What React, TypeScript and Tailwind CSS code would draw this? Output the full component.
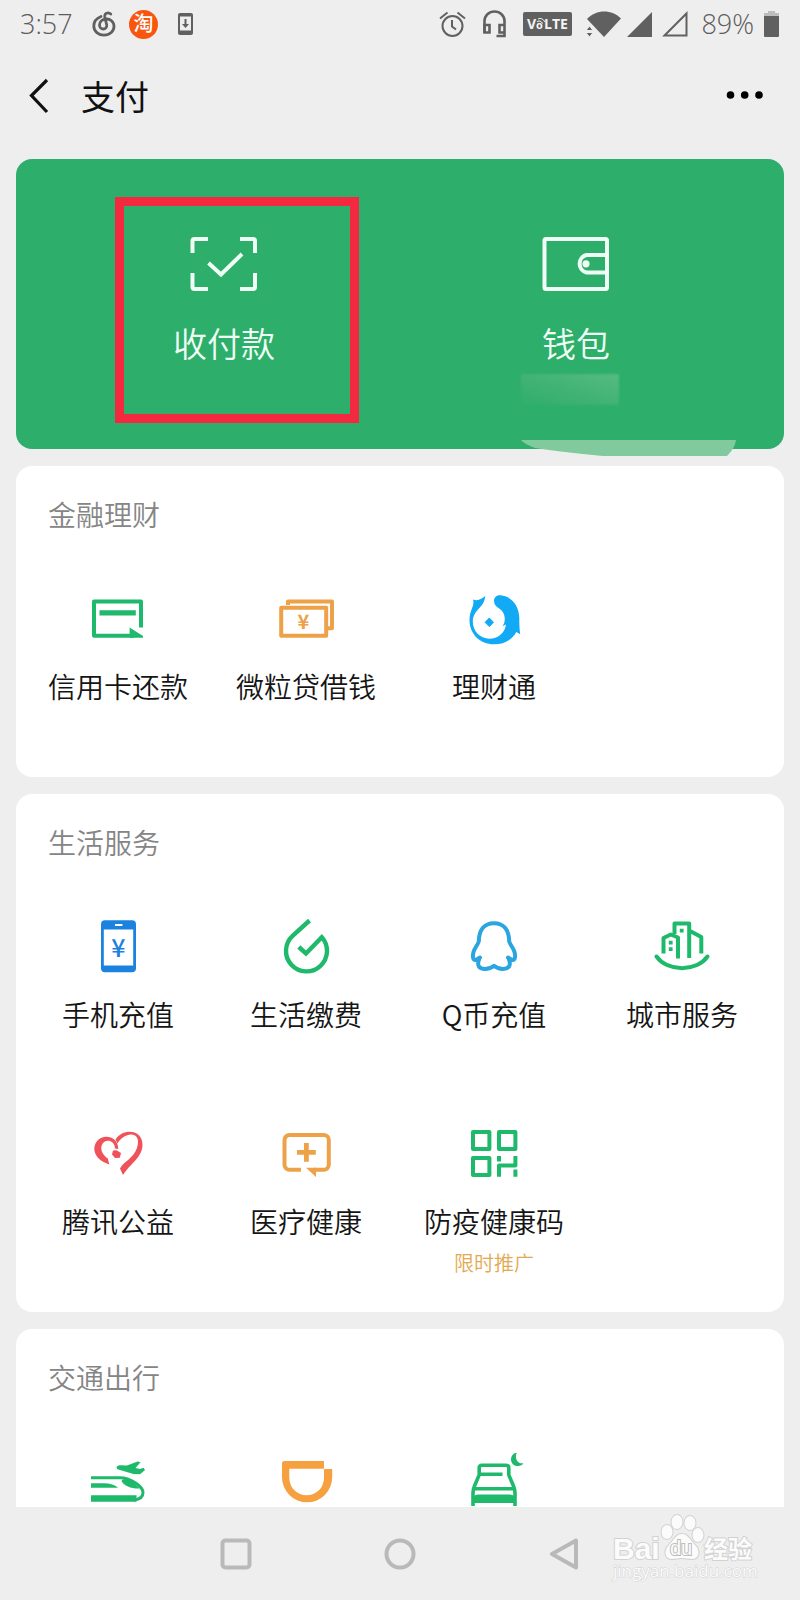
import type { ReactNode } from 'react'

type TEntry = {
  label?: string
  note?: string
  icon: ReactNode
}

const GREEN = '#1fb96b'
const ORANGE = '#eda24a'
const BLUE = '#1b82e0'
const SKY = '#12aaf5'
const RED = '#f0525a'

function Icon({ children }: { children: ReactNode }) {
  return (
    <svg
      viewBox="0 0 56 56"
      className="size-14 overflow-visible"
      fill="none"
      aria-hidden="true"
    >
      {children}
    </svg>
  )
}

const finance: TEntry[] = [
  {
    label: '信用卡还款',
    icon: (
      <Icon>
        <path d="M51 36.5V10.5H4V44.8H44" stroke={GREEN} strokeWidth="4" strokeLinejoin="round" />
        <path d="M9.5 19.2h36.3v5.4H9.5zM39.6 36.5 53 45v1.8H39.6z" fill={GREEN} />
      </Icon>
    ),
  },
  {
    label: '微粒贷借钱',
    icon: (
      <Icon>
        <g stroke={ORANGE} strokeWidth="4" strokeLinejoin="round">
          <path d="M3.2 16.8h45v28H3.2z" />
          <path d="M10 14v-3.6h44v26.8h-4" />
        </g>
        <text
          x="25.5"
          y="37.5"
          textAnchor="middle"
          fill={ORANGE}
          className="font-['Noto_Sans_CJK_SC'] text-[20px] font-bold"
        >
          ¥
        </text>
      </Icon>
    ),
  },
  {
    label: '理财通',
    icon: (
      <Icon>
        <path
          d="M7 8.5C12 10.5 16 7.5 19.2 5 18.5 17 7.5 18 6.8 30 6.5 40 14 47.7 23.3 47.7 32 47.7 39 42 40 33.5L36.2 35.2C39 32 39.2 28 38.2 24 36.5 17 28 17 28 10 28 6 31 4 34.5 4.2 44 5 53 13 53.3 27 53.3 34 53.5 38 54.3 43.2L50.3 41C46 49 38 53.3 28 53.3 14 53.3 3.5 43 3.5 29 3.5 19 9 15 7 8.5Z"
          fill={SKY}
        />
        <path d="m23.3 27 4.2 4.3-4.2 4.3-4.2-4.3z" fill={SKY} stroke={SKY} />
      </Icon>
    ),
  },
]

const life: TEntry[] = [
  {
    label: '手机充值',
    icon: (
      <Icon>
        <rect x="11" y="1.3" width="35" height="52" rx="4" fill={BLUE} />
        <path d="M13.8 10.4h29.4v36.2H13.8z" fill="#fff" />
        <path d="M25 5h7.4v2H25z" fill="#fff" />
        <text
          x="28.5"
          y="38"
          textAnchor="middle"
          fill={BLUE}
          className="font-['Noto_Sans_CJK_SC'] text-[25px] font-medium"
        >
          ¥
        </text>
      </Icon>
    ),
  },
  {
    label: '生活缴费',
    icon: (
      <Icon>
        <path
          d="M31.5 1.5 14.6 16.8A20.5 20.5 0 1 0 43.8 18.2L28 34.5 20.8 28"
          stroke={GREEN}
          strokeWidth="4.4"
        />
      </Icon>
    ),
  },
  {
    label: 'Q币充值',
    icon: (
      <Icon>
        <g stroke="#2aa5e0" strokeWidth="4" strokeLinecap="round" strokeLinejoin="round">
          <path d="M14 38.5 10 41C6.5 41.5 6.5 37 7.5 33 8.5 29 11.5 26.5 12.8 22.5 13 11 18 4.2 28 4.2 38 4.2 43 11 43.2 22.5 44.5 26.5 47.5 29 48.5 33 49.5 37 49.5 41.5 46 41L42 38.5" />
          <path d="M13 40.5C11 46 12.5 50 19 50 24 50 26 48.5 28 46.8 30 48.5 32 50 37 50 43.5 50 45 46 43 40.5" />
        </g>
      </Icon>
    ),
  },
  {
    label: '城市服务',
    icon: (
      <Icon>
        <g stroke={GREEN} strokeWidth="4" strokeLinejoin="round">
          <path d="M2.5 37.5C13.500 53 42.500 53 53.500 37.5" strokeLinecap="round" />
          <path d="M9.5 34.5V19L16.8 15.500 24 18.5V39.5" />
          <path d="M20.5 15V4.500H35.200V39M36 12 47.300 18V34.500" />
        </g>
        <path d="M25.800 9.800h3.800v3.800h-3.800zM14.800 21.800h3.800v3.800h-3.800zM14.800 28.200h3.800v3.800h-3.800z" fill={GREEN} />
      </Icon>
    ),
  },
  {
    label: '腾讯公益',
    icon: (
      <Icon>
        <g fill={RED}>
          <path d="M28.3 23C28 14 22 10.3 15.500 10.700 8 11.500 4 17.500 4.300 23.500 5 31 11 35.500 19.300 38.500L17.800 32.500C13 29 10.500 25 11.500 20 13 14.500 19 13.500 22.500 16.500 24.500 18.500 25 20.500 24.800 22.500Z" />
          <path d="M25.500 13.500C31 5.500 41 4 47.500 8 54 13 54 23 48.500 30.500 44 37 38 41 33 49L30 42.500C33 36 43 33 47 22 49.500 14 47.500 8.500 41 8.500 35 8.800 30 13 27.500 17.500Z" />
          <path d="m23 24.500 3.500-.3 4.500 2.800-1.200 4.800-4.800.2-3-3.500z" />
        </g>
      </Icon>
    ),
  },
  {
    label: '医疗健康',
    icon: (
      <Icon>
        <path
          d="M23 43.800H11.500A5 5 0 0 1 6.500 38.800V14A5 5 0 0 1 11.500 9H45.800A5 5 0 0 1 50.800 14V38.800A5 5 0 0 1 45.800 43.800H36"
          stroke={ORANGE}
          strokeWidth="4"
        />
        <path d="M28 41.800h10V51zM26 17h4.800v7h7v4.800h-7v7H26v-7h-7V24h7z" fill={ORANGE} />
      </Icon>
    ),
  },
  {
    label: '防疫健康码',
    note: '限时推广',
    icon: (
      <Icon>
        <path
          d="M7 6h16.400v17H7zM33 6h16.400v17H33zM7 32h16.400v17H7zM33 30v5.500M49.400 30v9.500H33v11.200M49.400 43.500v7.200"
          stroke={GREEN}
          strokeWidth="4"
          strokeLinejoin="round"
        />
      </Icon>
    ),
  },
]

const travel: TEntry[] = [
  {
    icon: (
      <Icon>
        <g fill={GREEN}>
          <path d="M1 29.300H14C20 29.300 25 31 28 33.800H1zM1 41.300H46.500V47.700H1z" />
          <path d="M31.500 27C33 24 39 24.500 43 28L50 34.500C42 35 34 32 31.500 27Z" />
          <path d="M26.500 13.800C26.500 12 28 11.200 30 11.200L37 11.500 47.500 7.500 50.500 8.200 45.500 14 50 15 53.500 13.800 55 16 50 20.300 43.500 20 27.500 15.200Z" />
        </g>
        <path
          d="M1 23.800H30C40 23.800 53 32 53 38.500 53 43 49 45.500 44 46"
          stroke={GREEN}
          strokeWidth="3"
        />
      </Icon>
    ),
  },
  {
    icon: (
      <Icon>
        <path
          fillRule="evenodd"
          d="M4 9.500A2.500 2.500 0 0 1 6.500 7H46V15H54.200V23.200A25.100 25.100 0 0 1 4 23.200ZM11.300 14.800V24A17.350 17.350 0 0 0 46 24V14.800Z"
          fill="#f7a040"
        />
      </Icon>
    ),
  },
  {
    icon: (
      <Icon>
        <g stroke={GREEN} strokeWidth="3.600">
          <path d="M7 52V39Q7 35.500 8.500 32L13.200 21V14C13.200 12 14 11.200 16 11.200H40C42 11.200 42.800 12 42.800 14V21L47.500 32Q49 35.500 49 39V52" />
          <path d="M14 20.200H36.500M8 34.800H48" />
        </g>
        <path d="M7 43Q8.500 40.500 12 40.500H44Q47.500 40.500 49 43V49H7z" fill={GREEN} />
        <path d="M50.700-1.300C43-.5 43 12 52 12 54.500 12 56.500 11 57.300 9.300 51 10 48.500 4 50.700-1.300Z" fill={GREEN} />
      </Icon>
    ),
  },
]

function Section({ title, items }: { title: string; items: TEntry[] }) {
  return (
    <section className="shrink-0 rounded-2xl bg-white px-2 pt-7">
      <h2 className="px-6 text-[28px] leading-10 font-[350] text-[#858585]">
        {title}
      </h2>
      <div className="mt-[57px] grid grid-cols-4 gap-y-[21px]">
        {items.map((item, i) => (
          <button
            key={i}
            type="button"
            className="flex h-[186px] flex-col items-center whitespace-nowrap"
          >
            {item.icon}
            {item.label && (
              <span className="mt-[19px] text-[28px] leading-10 font-[350] text-[#151515]">
                {item.label}
              </span>
            )}
            {item.note && (
              <span className="mt-[6px] text-[20px] leading-8 font-[350] text-[#e2a951]">
                {item.note}
              </span>
            )}
          </button>
        ))}
      </div>
    </section>
  )
}

function StatusBar() {
  return (
    <div className="flex h-12 shrink-0 items-center justify-between pr-[21px] pl-5 font-['Open_Sans','Noto_Sans_CJK_SC',sans-serif] text-[27px] leading-[46px] font-[350] text-[#5c5c5c]">
      <div className="flex items-center">
        <span className="w-[72px]">3:57</span>
        <svg width="24" height="26" viewBox="0 0 24 26" fill="none" stroke="#606060" strokeWidth="2.800" strokeLinecap="round" aria-hidden="true">
          <path d="M9 5.500C4 7.500 1.800 11.500 1.800 15 1.800 20.500 6.500 24.200 12 24.200 18 24.200 22 20 22 15.500 22 10.500 18 7.700 14 8 10 8.300 7.500 11 7.500 14 7.500 16.500 9.300 18 11.300 18 13.500 18 15 16.300 14.700 14L12.800 6C12.300 3.300 14 1.800 16 1.800 17.200 1.800 18 2.300 18.800 3" />
        </svg>
        <span className="ml-[13px] flex size-[29px] items-center justify-center rounded-full bg-[#f8560f] text-[20px] leading-none font-medium text-white">
          淘
        </span>
        <svg width="15" height="22" viewBox="0 0 15 22" className="ml-5" aria-hidden="true">
          <rect width="15" height="22" rx="2" fill="#606060" />
          <path d="M2 3.500h11v14H2z" fill="#eee" />
          <path d="M6.500 6h2v5H11l-3.500 4L4 11h2.500z" fill="#606060" />
        </svg>
      </div>
      <div className="flex items-center">
        <svg width="27" height="26" viewBox="0 0 27 26" fill="none" stroke="#606060" strokeWidth="2" aria-hidden="true">
          <circle cx="13.500" cy="15" r="10" />
          <path d="M13 9v6.500l4 3M1 7.500 8.500 1.500M26 7.500 18.500 1.500" />
        </svg>
        <svg width="23" height="28" viewBox="0 0 23 28" className="ml-[17px]" fill="none" stroke="#606060" strokeWidth="2.600" aria-hidden="true">
          <path d="M1.500 22.500V11C1.500 5.500 6 1.500 11.500 1.500S21.500 5.500 21.500 11V26H13.500" />
          <path d="M1.500 15H6.500V22.500H1.500zM21.500 15H16.500V22.500H21.500" />
        </svg>
        <span className="ml-[17px] flex h-6 w-[49px] items-center justify-center rounded-[2px] bg-[#606060] text-[#f4f4f4]">
          <svg width="49" height="24" viewBox="0 0 49 24" fill="currentColor" role="img" aria-label="VoLTE">
            <g className="font-['Open_Sans'] font-bold">
              <text x="4" y="17" className="text-[14px]">V</text>
              <text x="13" y="17" className="text-[11px]">o</text>
              <text x="21" y="17" className="text-[14px]">LTE</text>
            </g>
            <path d="M14 9.500q3-2 6 2M15 7q4-2 7 3" fill="none" stroke="currentColor" />
          </svg>
        </span>
        <svg width="36" height="26" viewBox="0 0 36 26" className="ml-[14px]" fill="#606060" aria-hidden="true">
          <path d="M1 8C10-2 26-2 35 7.500L18 26Z" />
          <path d="M0 19.500 3.500 15 7 19.500zM0 21.500H7L3.500 26z" stroke="#eee" />
        </svg>
        <svg width="25" height="25" viewBox="0 0 25 25" className="ml-[5px]" aria-hidden="true">
          <path d="M25 0V25H0z" fill="#606060" />
        </svg>
        <svg width="26" height="26" viewBox="0 0 26 26" className="ml-[10px]" aria-hidden="true">
          <path d="M24.500 2.500V24.500H2.500z" fill="none" stroke="#606060" strokeWidth="2" />
        </svg>
        <span className="ml-[13px]">89%</span>
        <svg width="15" height="26" viewBox="0 0 15 26" className="ml-[10px]" aria-hidden="true">
          <path d="M4 0h7v2h4v3H0V2h4z" fill="#bdbdbd" />
          <path d="M0 5h15v20a1 1 0 0 1-1 1H1a1 1 0 0 1-1-1z" fill="#606060" />
        </svg>
      </div>
    </div>
  )
}

function Header() {
  return (
    <header className="flex h-24 shrink-0 items-center justify-between pr-9 pl-7">
      <div className="flex items-center">
        <button type="button" aria-label="返回">
          <svg width="22" height="36" viewBox="0 0 22 36" fill="none" aria-hidden="true">
            <path d="M19 2 3.500 17.500 19 34" stroke="#111" strokeWidth="3.200" />
          </svg>
        </button>
        <h1 className="ml-[31px] text-[34px] leading-[48px] text-[#111]">支付</h1>
      </div>
      <button type="button" aria-label="更多">
        <svg width="38" height="10" viewBox="0 0 38 10" fill="#000" aria-hidden="true">
          <circle cx="4.500" cy="4" r="3.800" />
          <circle cx="18.700" cy="4" r="3.800" />
          <circle cx="33" cy="4" r="3.800" />
        </svg>
      </button>
    </header>
  )
}

function PayCard() {
  return (
    <section className="relative grid h-[290px] shrink-0 grid-cols-2 rounded-2xl bg-[#2dae6a] px-8 text-[34px] leading-[50px] font-[350] text-[#effff5]">
      <button type="button" className="relative flex flex-col items-center pt-[77px]">
        <svg width="68" height="56" viewBox="0 0 68 56" fill="none" stroke="#effff5" strokeWidth="4" aria-hidden="true">
          <path
            d="M2.500 17V5Q2.500 3 4.500 3H18M50 3H63Q65 3 65 5V17M65 37V51Q65 53 63 53H50M18 53H4.500Q2.500 53 2.500 51V37"
            strokeLinejoin="round"
          />
          <path d="M18.500 27 31 38.500 52 18" />
        </svg>
        <span className="mt-[26px]">收付款</span>
        <span className="absolute top-[38px] left-1/2 h-[226px] w-[244px] -translate-x-[109px] border-[9px] border-[#f4283f]" />
      </button>
      <button type="button" className="flex flex-col items-center pt-[77px]">
        <svg width="68" height="56" viewBox="0 0 68 56" fill="none" stroke="#effff5" strokeWidth="4" aria-hidden="true">
          <rect x="2.500" y="3" width="62.500" height="50" rx="1.500" />
          <path d="M64 19H44.500A9 9 0 0 0 44.500 36.500H64" />
          <circle cx="44" cy="27.800" r="3.600" fill="#effff5" stroke="none" />
        </svg>
        <span className="mt-[26px]">钱包</span>
        <span className="mt-[6px] mr-3 h-[31px] w-[98px] bg-linear-to-tr from-[#2fae6b] via-[#42b375] to-[#55bb82] blur-[1px]" />
      </button>
      <svg width="215" height="16" viewBox="0 0 215 16" className="absolute right-12 -bottom-[7px]" aria-hidden="true">
        <path d="M0 0H215Q214 8 206 16H82Q40 12 14 8 3 4 0 0Z" fill="#80ca9e" />
      </svg>
    </section>
  )
}

function Watermark() {
  return (
    <svg
      width="146"
      height="72"
      viewBox="0 0 146 72"
      className="absolute right-[43px] bottom-[15px] overflow-visible"
      fill="#fbfbfb"
      stroke="#d2d2d2"
      strokeWidth="2"
      paintOrder="stroke"
      aria-hidden="true"
    >
      <ellipse cx="56" cy="19" rx="5.500" ry="7" />
      <ellipse cx="66" cy="9" rx="5.500" ry="7" />
      <ellipse cx="79" cy="10" rx="5.500" ry="7" />
      <ellipse cx="87" cy="22" rx="5.500" ry="7" />
      <path d="M71 21C77 21 79 27 84 32 90 38 88 46 81 46 77 46 75 45 71 45 67 45 65 46 61 46 54 46 52 38 58 32 63 27 65 21 71 21Z" />
      <text x="2" y="46" className="font-['Liberation_Sans'] text-[30px] font-bold">Bai</text>
      <text x="59" y="42" stroke="#bcbcbc" className="font-['Liberation_Sans'] text-[20px]">du</text>
      <text x="93" y="45" className="font-['Noto_Sans_CJK_SC'] text-[24px] font-bold">经验</text>
      <text x="2" y="64" strokeWidth="1" className="font-['Open_Sans'] text-[17px]">jingyan.baidu.com</text>
    </svg>
  )
}

function NavBar() {
  return (
    <nav className="relative flex h-[93px] shrink-0 items-center justify-center text-[#b9b9b9]">
      <button type="button" aria-label="最近任务" className="flex w-[164px] justify-center">
        <svg width="32" height="32" viewBox="0 0 32 32" fill="none" stroke="currentColor" strokeWidth="4" aria-hidden="true">
          <rect x="2.500" y="2.500" width="27" height="27" rx="3" />
        </svg>
      </button>
      <button type="button" aria-label="主屏幕" className="flex w-[164px] justify-center">
        <svg width="32" height="32" viewBox="0 0 32 32" fill="none" stroke="currentColor" strokeWidth="4" aria-hidden="true">
          <circle cx="16" cy="16" r="13.500" />
        </svg>
      </button>
      <button type="button" aria-label="后退" className="flex w-[164px] justify-center">
        <svg width="32" height="32" viewBox="0 0 32 32" fill="none" stroke="currentColor" strokeWidth="4" strokeLinejoin="round" aria-hidden="true">
          <path d="M28 2.500V29.500L4 16Z" />
        </svg>
      </button>
      <Watermark />
    </nav>
  )
}

export default function App() {
  return (
    <div
      lang="zh-CN"
      className="flex h-screen flex-col overflow-hidden bg-[#eeeeee] font-['Noto_Sans_CJK_SC',sans-serif]"
    >
      <StatusBar />
      <Header />
      <main className="flex min-h-0 flex-1 flex-col gap-[17px] overflow-hidden px-4 pt-[15px]">
        <PayCard />
        <Section title="金融理财" items={finance} />
        <Section title="生活服务" items={life} />
        <Section title="交通出行" items={travel} />
      </main>
      <NavBar />
    </div>
  )
}
